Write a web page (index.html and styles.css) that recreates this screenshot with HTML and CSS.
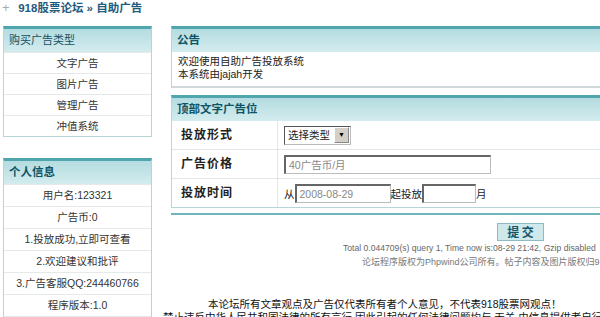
FILE: index.html
```html
<!DOCTYPE html>
<html lang="zh-CN">
<head>
  <meta charset="UTF-8" />
  <title>918股票论坛 - 自助广告</title>
  <link rel="stylesheet" href="styles.css">
</head>
<body>
<div class="page">
  <!-- 导航 -->
  <div class="crumb">
    <span class="crumb-icon">+</span>
    <span>918股票论坛 » 自助广告</span>
  </div>

  <div class="main">
    <!-- 左侧 -->
    <div class="side">
      <div class="box">
        <div class="box-head thin">购买广告类型</div>
        <div class="side-row">文字广告</div>
        <div class="side-row">图片广告</div>
        <div class="side-row">管理广告</div>
        <div class="side-row">冲值系统</div>
      </div>

      <div class="box info">
        <div class="box-head">个人信息</div>
        <div class="side-row">用户名:123321</div>
        <div class="side-row">广告币:0</div>
        <div class="side-row">1.投放成功,立即可查看</div>
        <div class="side-row">2.欢迎建议和批评</div>
        <div class="side-row">3.广告客服QQ:244460766</div>
        <div class="side-row">程序版本:1.0</div>
        <div class="side-row"></div>
      </div>
    </div>

    <!-- 右侧 -->
    <div class="content">
      <div class="box notice">
        <div class="box-head">公告</div>
        <div class="notice-body">
          欢迎使用自助广告投放系统<br>
          本系统由jajah开发
        </div>
      </div>

      <div class="box form-box">
        <div class="box-head">顶部文字广告位</div>
        <div class="form-row">
          <div class="form-label">投放形式</div>
          <div class="form-value">
            <span class="fake-select">选择类型<span class="arrow">▼</span></span>
          </div>
        </div>
        <div class="form-row">
          <div class="form-label">广告价格</div>
          <div class="form-value">
            <span class="field wide">40广告币/月</span>
          </div>
        </div>
        <div class="form-row">
          <div class="form-label">投放时间</div>
          <div class="form-value">
            从<span class="field date">2008-08-29</span>起投放<span class="field months"></span>月
          </div>
        </div>
      </div>

      <div class="teal-line"></div>

      <div class="submit-row">
        <button class="submit">提 交</button>
      </div>
      <div class="debug">Total 0.044709(s) query 1, Time now is:08-29 21:42, Gzip disabled</div>
      <div class="copy">论坛程序版权为Phpwind公司所有。帖子内容及图片版权归918股票论坛所有</div>

      <div class="footer">
        <div class="foot-1">本论坛所有文章观点及广告仅代表所有者个人意见，不代表918股票网观点！</div>
        <div class="foot-2">禁止违反中华人民共和国法律的所有言行,因此引起的任何法律问题均与 无关,由信息提供者自行负责</div>
      </div>
    </div>
  </div>
</div>
</body>
</html>
```

FILE: styles.css
```css
html, body {
  margin: 0;
  overflow: hidden;
}
body {
  font-family: "Liberation Sans", "Noto Sans CJK SC", sans-serif;
  font-size: 10.5px;
  color: #222;
  background: #fff;
}
.page {
  width: 762px;
}
.crumb {
  height: 15px;
  line-height: 15px;
  padding-left: 2px;
  font-weight: bold;
  font-size: 11.5px;
  color: #1f5b7e;
}
.crumb-icon {
  display: inline-block;
  width: 13px;
  color: #aaa;
  font-weight: normal;
  font-size: 13px;
}
.main {
  display: flex;
  gap: 19px;
  padding: 11px 0 0 3px;
}
.side {
  width: 149px;
  flex: none;
}
.content {
  flex: 1;
}
.box {
  border: 1px solid #b7d4d7;
  border-top: 3px solid #4fa6ac;
  background: #fff;
}
.box-head {
  height: 23px;
  line-height: 23px;
  padding-left: 5px;
  background: linear-gradient(#b4dce0, #d3ecee);
  color: #0d5566;
  font-weight: bold;
  font-size: 11.5px;
}
.box-head.thin {
  font-weight: normal;
  font-size: 11px;
  color: #174f60;
}
.side-row {
  height: 20px;
  line-height: 20px;
  border-top: 1px solid #e6e9e9;
  text-align: center;
  color: #333;
}
.info {
  margin-top: 21px;
}
.info .side-row {
  height: 21px;
  line-height: 21px;
}
.notice {
  border-bottom: 2px solid #cfd8d8;
}
.notice-body {
  padding: 3px 6px 5px;
  line-height: 13px;
  color: #222;
}
.form-box {
  margin-top: 7px;
}
.form-row {
  display: grid;
  grid-template-columns: 106px 1fr;
  height: 28px;
  border-top: 1px solid #e3e6e6;
}
.box-head + .form-row {
  border-top: none;
}
.form-label {
  border-right: 1px solid #e3e6e6;
  padding-left: 9px;
  line-height: 28px;
  font-weight: bold;
  font-size: 12px;
  letter-spacing: 1px;
  color: #222;
}
.form-value {
  display: flex;
  align-items: center;
  padding-left: 6px;
}
.fake-select {
  display: inline-flex;
  align-items: center;
  height: 17px;
  padding-left: 3px;
  border: 1px solid #555;
  border-right-color: #bbb;
  border-bottom-color: #bbb;
  background: #fff;
  line-height: 17px;
}
.arrow {
  display: inline-block;
  width: 13px;
  height: 14px;
  margin: 0 1px 0 4px;
  background: #d4d0c8;
  border: 1px solid #888;
  border-top-color: #fff;
  border-left-color: #fff;
  font-size: 7px;
  line-height: 14px;
  text-align: center;
  color: #000;
}
.field {
  display: inline-block;
  height: 16px;
  line-height: 16px;
  padding-left: 3px;
  border: 1px solid #bbb;
  border-top: 2px solid #666;
  border-left: 2px solid #666;
  color: #888;
  background: #fff;
}
.field.wide {
  width: 201px;
}
.field.date {
  width: 90px;
}
.field.months {
  width: 48px;
}
.teal-line {
  height: 2px;
  margin-top: 5px;
  background: #6fb6ba;
}
.submit-row {
  padding: 8px 0 0 326px;
}
.submit {
  width: 47px;
  height: 18px;
  padding: 0;
  border: 1px solid #8bbcc3;
  background: #cfe8ec;
  color: #16566a;
  font-weight: bold;
  font-size: 12px;
  font-family: "Noto Sans CJK SC", sans-serif;
  line-height: 16px;
}
.debug {
  padding: 1px 0 0 172px;
  font-size: 8.6px;
  line-height: 12px;
  color: #666;
  white-space: nowrap;
}
.copy {
  padding: 2px 0 0 191px;
  font-size: 9px;
  line-height: 13px;
  color: #777;
  white-space: nowrap;
}
.footer {
  margin-left: -8px;
  padding-top: 29px;
  color: #111;
  line-height: 13px;
  white-space: nowrap;
}
.foot-1 {
  padding-left: 45px;
}
```
